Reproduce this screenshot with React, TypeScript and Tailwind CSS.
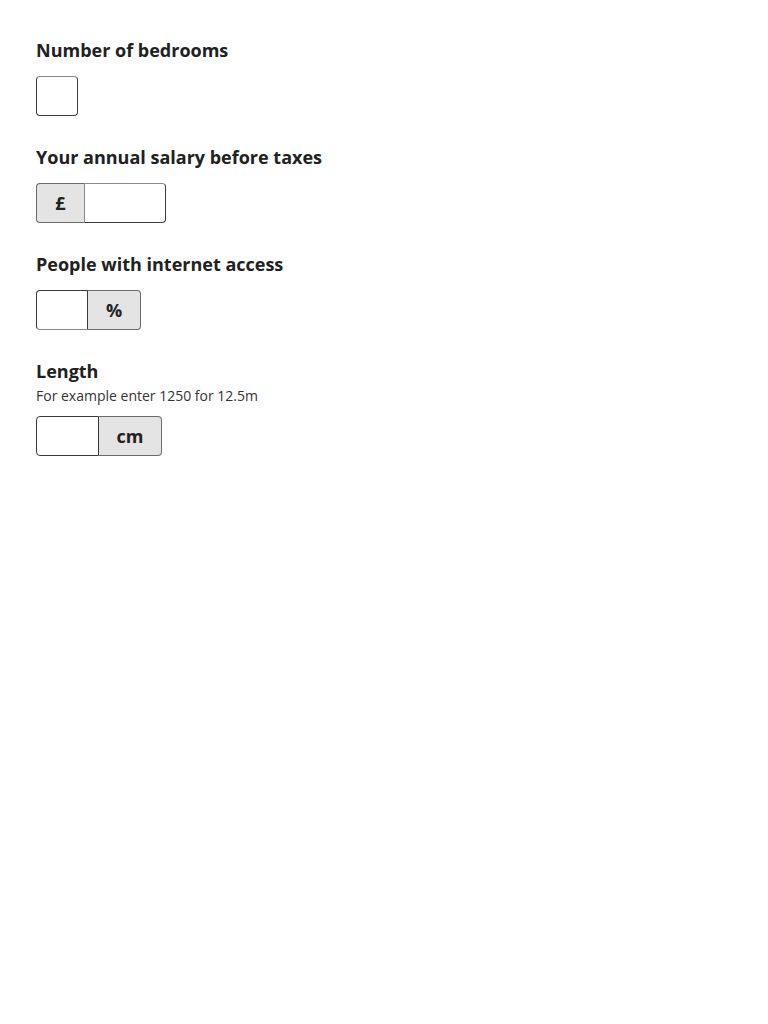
import React from "react";

const font = { fontFamily: '"Open Sans", "Noto Sans", sans-serif' };

function Label({ children }: { children: React.ReactNode }) {
  return (
    <label className="block text-[18px] leading-[27px] font-bold text-[#212121]">
      {children}
    </label>
  );
}

export default function App() {
  return (
    <div className="min-h-[1024px] bg-white px-9 pt-[37px]" style={font}>
      <div className="mb-[28px]">
        <Label>Number of bedrooms</Label>
        <div className="mt-[12px] flex">
          <input
            type="text"
            className="h-[40px] w-[42px] rounded-[4px] border border-[#3a3a3a] border-t-[#8a8a8a] bg-white outline-none"
          />
        </div>
      </div>

      <div className="mb-[28px]">
        <Label>Your annual salary before taxes</Label>
        <div className="mt-[12px] flex">
          <div className="flex h-[40px] w-[48px] items-center justify-center rounded-l-[4px] border border-r-0 border-[#6a6a6a] bg-[#e4e4e4] text-[18px] font-bold text-[#212121]">
            £
          </div>
          <input
            type="text"
            className="h-[40px] w-[82px] rounded-r-[4px] border border-[#3a3a3a] border-t-[#8a8a8a] border-l-[#8a8a8a] bg-white outline-none"
          />
        </div>
      </div>

      <div className="mb-[28px]">
        <Label>People with internet access</Label>
        <div className="mt-[12px] flex">
          <input
            type="text"
            className="h-[40px] w-[52px] rounded-l-[4px] border border-[#3a3a3a] border-b-[#8a8a8a] bg-white outline-none"
          />
          <div className="flex h-[40px] w-[53px] items-center justify-center rounded-r-[4px] border border-l-0 border-[#6a6a6a] bg-[#e4e4e4] text-[18px] font-bold text-[#212121]">
            %
          </div>
        </div>
      </div>

      <div className="mb-[28px]">
        <Label>Length</Label>
        <div className="text-[14px] leading-[21px] text-[#333]">For example enter 1250 for 12.5m</div>
        <div className="mt-[10px] flex">
          <input
            type="text"
            className="h-[40px] w-[63px] rounded-l-[4px] border border-[#3a3a3a] bg-white outline-none"
          />
          <div className="flex h-[40px] w-[63px] items-center justify-center rounded-r-[4px] border border-l-0 border-[#6a6a6a] bg-[#e4e4e4] text-[18px] font-bold text-[#212121]">
            cm
          </div>
        </div>
      </div>
    </div>
  );
}
